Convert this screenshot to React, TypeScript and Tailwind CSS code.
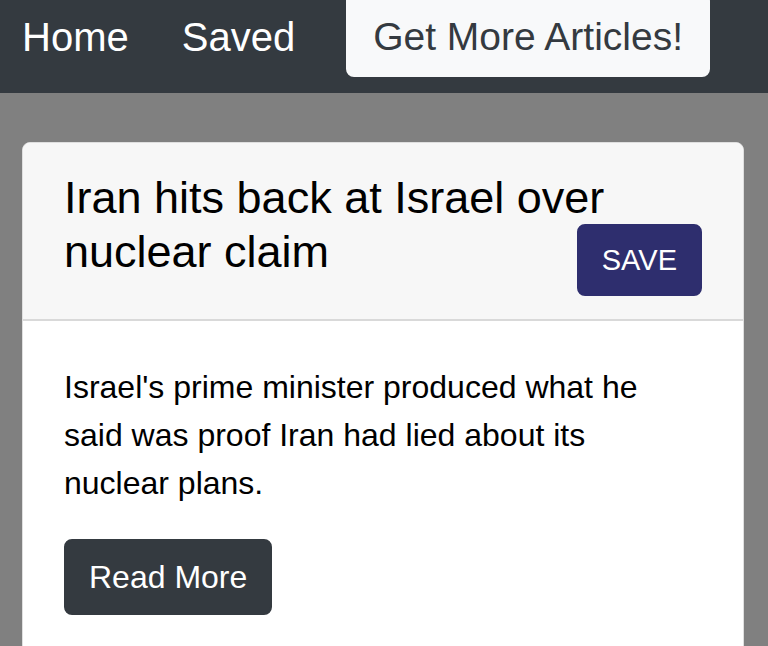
const FONT = "font-['Liberation_Sans',Arial,Helvetica,sans-serif]";

function Navbar() {
  return (
    <nav className="flex h-[93px] items-start bg-[#343a40] pl-[22px]">
      <a className="pt-[7px] text-[40px] leading-[60px] text-white">Home</a>
      <a className="ml-[53px] pt-[7px] text-[40px] leading-[60px] text-white">Saved</a>
      <button className="ml-[51px] -mt-[7px] rounded-[8px] border-2 border-[#f8f9fa] bg-[#f8f9fa] px-[25px] pb-[8px] pt-[12px] text-[39px] leading-[60px] text-[#343a40]">
        Get More Articles!
      </button>
    </nav>
  );
}

function ArticleCard({ title, summary }: { title: string; summary: string }) {
  return (
    <div className="overflow-hidden rounded-[8px] border border-[#dfdfdf] bg-white">
      <div className="border-b-2 border-[#d9d9d9] bg-[#f7f7f7] pb-[24px] pl-[41px] pr-[41px] pt-[28px]">
        <h3 className="mb-[16px] text-[45px] leading-[54px] text-black">
          {title}
          <button className="float-right -mt-[1px] rounded-[8px] border-2 border-[#2e2e6e] bg-[#2e2e6e] px-[23px] py-[12px] text-[29px] leading-[44px] text-white">
            SAVE
          </button>
        </h3>
      </div>
      <div className="pb-[40px] pl-[41px] pr-[52px] pt-[42px]">
        <p className="mb-[32px] text-[32px] leading-[48px] text-black">{summary}</p>
        <button className="rounded-[8px] border-2 border-[#343a40] bg-[#343a40] px-[23px] py-[12px] text-[32px] leading-[48px] text-white">
          Read More
        </button>
      </div>
    </div>
  );
}

export default function App() {
  return (
    <div className={`min-h-screen bg-[#808080] ${FONT}`}>
      <Navbar />
      <main className="pl-[22px] pr-[24px] pt-[49px]">
        <ArticleCard
          title="Iran hits back at Israel over nuclear claim"
          summary="Israel's prime minister produced what he said was proof Iran had lied about its nuclear plans."
        />
      </main>
    </div>
  );
}
